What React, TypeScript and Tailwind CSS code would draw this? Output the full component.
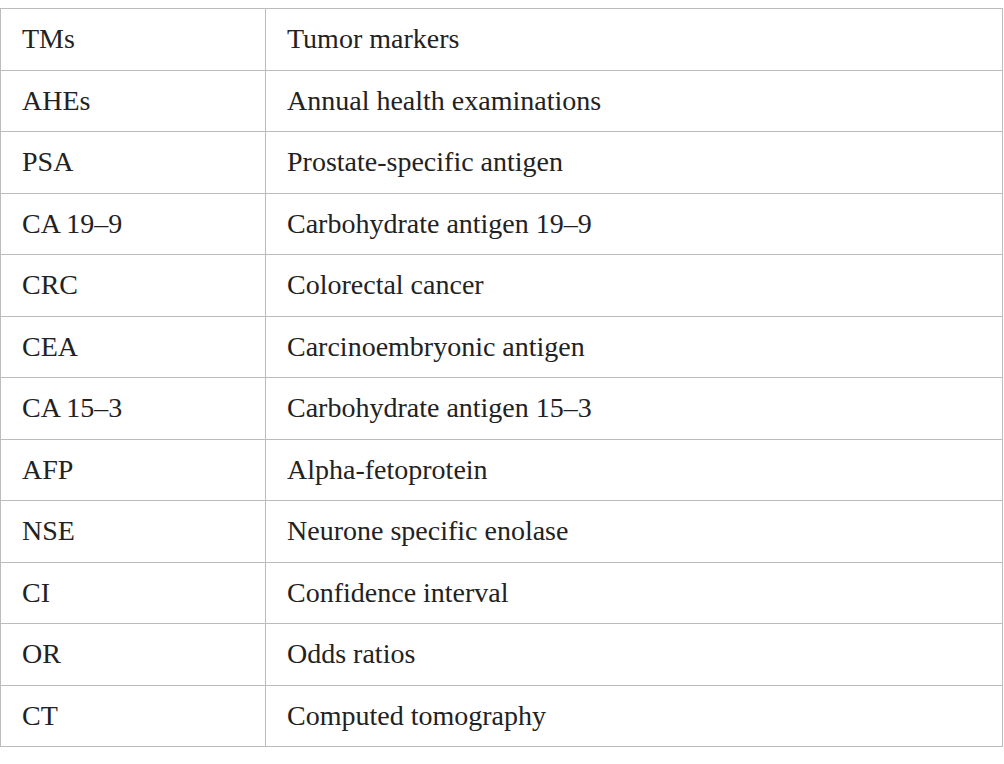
import React from "react";

const rows: [string, string][] = [
  ["TMs", "Tumor markers"],
  ["AHEs", "Annual health examinations"],
  ["PSA", "Prostate-specific antigen"],
  ["CA 19–9", "Carbohydrate antigen 19–9"],
  ["CRC", "Colorectal cancer"],
  ["CEA", "Carcinoembryonic antigen"],
  ["CA 15–3", "Carbohydrate antigen 15–3"],
  ["AFP", "Alpha-fetoprotein"],
  ["NSE", "Neurone specific enolase"],
  ["CI", "Confidence interval"],
  ["OR", "Odds ratios"],
  ["CT", "Computed tomography"],
];

export default function App() {
  return (
    <div className="w-[1004px] h-[764px] bg-white pt-2" style={{ fontFamily: '"Liberation Serif", serif' }}>
      <table className="w-[1003px] border-collapse text-[28px] text-[#222]">
        <tbody>
          {rows.map(([a, b]) => (
            <tr key={a} className="h-[61.5px]">
              <td className="w-[265px] border border-[#bcbcbc] pl-[21px] align-middle leading-none">{a}</td>
              <td className="border border-[#bcbcbc] pl-[21px] align-middle leading-none">{b}</td>
            </tr>
          ))}
        </tbody>
      </table>
    </div>
  );
}
